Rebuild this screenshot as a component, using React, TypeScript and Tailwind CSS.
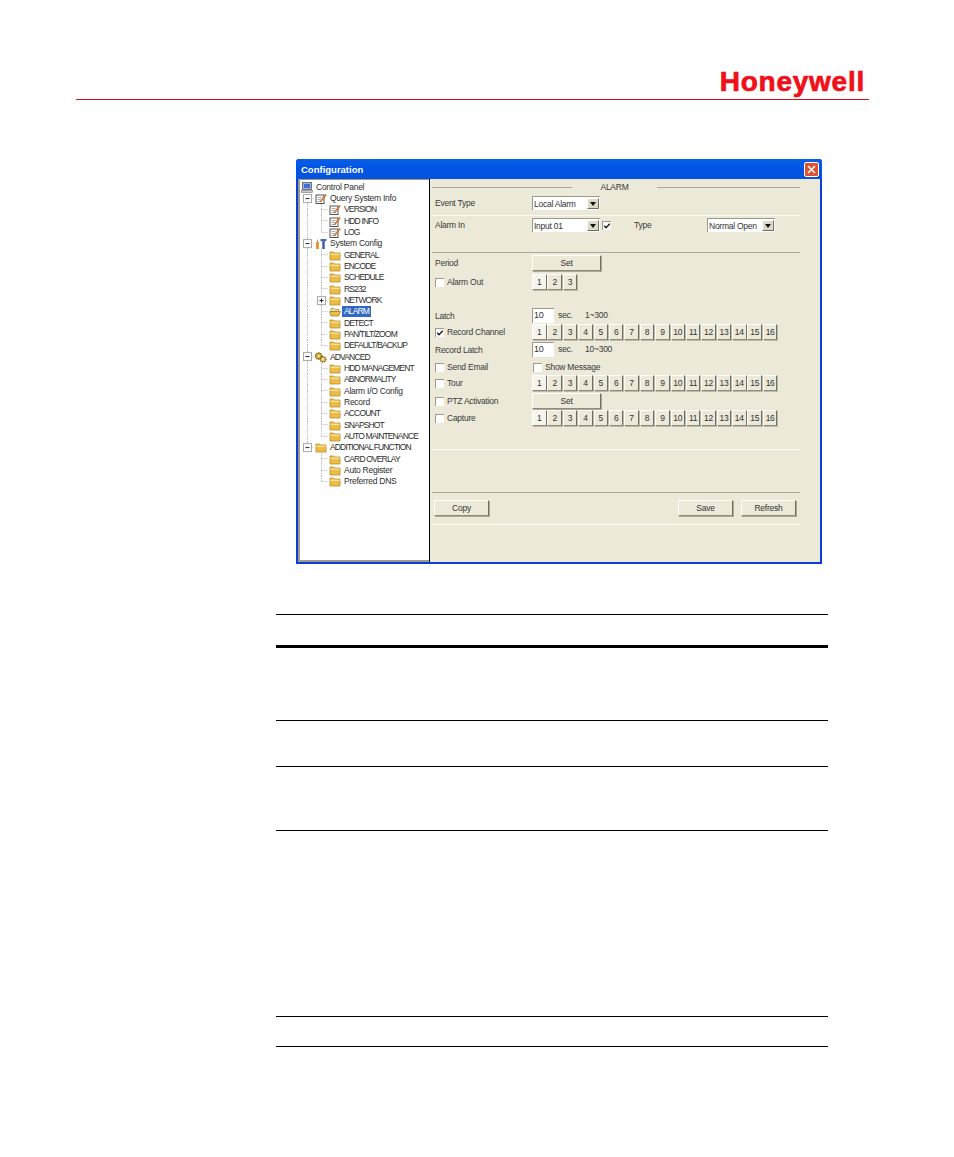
const font = { fontFamily: '"Liberation Sans", Arial, sans-serif' };

type Kind = "monitor" | "note" | "tools" | "gears" | "folder" | "open";
type Item = { label: string; level: 0 | 1; icon: Kind; exp?: "minus" | "plus"; rail?: boolean; v?: "full" | "top" | "bottom" | "none"; sel?: boolean };

const items: Item[] = [
  { label: "Control Panel", level: 0, icon: "monitor", v: "none" },
  { label: "Query System Info", level: 0, icon: "note", exp: "minus", v: "bottom" },
  { label: "VERSION", level: 1, icon: "note", rail: true },
  { label: "HDD INFO", level: 1, icon: "note", rail: true },
  { label: "LOG", level: 1, icon: "note", rail: true },
  { label: "System Config", level: 0, icon: "tools", exp: "minus", v: "full" },
  { label: "GENERAL", level: 1, icon: "folder", rail: true },
  { label: "ENCODE", level: 1, icon: "folder", rail: true },
  { label: "SCHEDULE", level: 1, icon: "folder", rail: true },
  { label: "RS232", level: 1, icon: "folder", rail: true },
  { label: "NETWORK", level: 1, icon: "folder", rail: true, exp: "plus" },
  { label: "ALARM", level: 1, icon: "open", rail: true, sel: true },
  { label: "DETECT", level: 1, icon: "folder", rail: true },
  { label: "PAN/TILT/ZOOM", level: 1, icon: "folder", rail: true },
  { label: "DEFAULT/BACKUP", level: 1, icon: "folder", rail: true },
  { label: "ADVANCED", level: 0, icon: "gears", exp: "minus", v: "full" },
  { label: "HDD MANAGEMENT", level: 1, icon: "folder", rail: true },
  { label: "ABNORMALITY", level: 1, icon: "folder", rail: true },
  { label: "Alarm I/O Config", level: 1, icon: "folder", rail: true },
  { label: "Record", level: 1, icon: "folder", rail: true },
  { label: "ACCOUNT", level: 1, icon: "folder", rail: true },
  { label: "SNAPSHOT", level: 1, icon: "folder", rail: true },
  { label: "AUTO MAINTENANCE", level: 1, icon: "folder", rail: true },
  { label: "ADDITIONAL FUNCTION", level: 0, icon: "folder", exp: "minus", v: "top" },
  { label: "CARD OVERLAY", level: 1, icon: "folder" },
  { label: "Auto Register", level: 1, icon: "folder" },
  { label: "Preferred DNS", level: 1, icon: "folder" },
];

function Icon({ kind }: { kind: Kind }) {
  if (kind === "folder")
    return (
      <svg viewBox="0 0 12 11" className="w-[12px] h-[11px] shrink-0">
        <path d="M1 2h3.5l1 1H11v7H1z" fill="#eebb44" stroke="#b58f2c" strokeWidth="0.8" />
        <path d="M1.5 4.3h9" stroke="#fbe7a6" strokeWidth="1.2" />
      </svg>
    );
  if (kind === "open")
    return (
      <svg viewBox="0 0 12 11" className="w-[12px] h-[11px] shrink-0">
        <path d="M2 2.5h3l1 1h4v2H2z" fill="#f7e3a0" stroke="#8f7a30" strokeWidth="0.7" />
        <path d="M0.5 5.5h11l-2 4.5H2z" fill="#eebb44" stroke="#8f7a30" strokeWidth="0.7" />
      </svg>
    );
  if (kind === "note")
    return (
      <svg viewBox="0 0 12 11" className="w-[12px] h-[11px] shrink-0">
        <rect x="1" y="2" width="8" height="8.5" fill="#fff" stroke="#555" strokeWidth="1" />
        <path d="M2.5 4.5h4M2.5 6.5h3M2.5 8.5h4" stroke="#888" strokeWidth="0.7" />
        <path d="M5.5 7.5 10.5 1.2l1 .8-5 6.3-1.5.7z" fill="#e8862a" stroke="#a04a10" strokeWidth="0.4" />
      </svg>
    );
  if (kind === "monitor")
    return (
      <svg viewBox="0 0 12 11" className="w-[12px] h-[11px] shrink-0">
        <rect x="1.5" y="0.5" width="9" height="7" fill="#9db4dd" stroke="#666" strokeWidth="0.9" />
        <rect x="3" y="2" width="6" height="4" fill="#3f6fd0" />
        <rect x="0.5" y="8.5" width="11" height="2" fill="#c9c9c9" stroke="#777" strokeWidth="0.6" />
      </svg>
    );
  if (kind === "tools")
    return (
      <svg viewBox="0 0 12 11" className="w-[12px] h-[11px] shrink-0">
        <rect x="1" y="4" width="3" height="7" fill="#e69a2e" />
        <rect x="2" y="1.5" width="1" height="2.5" fill="#999" />
        <rect x="5.5" y="1" width="6" height="2.2" fill="#4a6fb0" />
        <rect x="7.3" y="3" width="2.4" height="8" fill="#3b5c98" />
      </svg>
    );
  return (
    <svg viewBox="0 0 14 12" className="w-[13px] h-[11px] shrink-0 -ml-[1px]">
      <circle cx="5" cy="4.4" r="3.4" fill="#e0b02c" stroke="#6b5a20" strokeWidth="1.6" strokeDasharray="1.3 0.9" />
      <circle cx="5" cy="4.4" r="1" fill="#fff" />
      <circle cx="9.8" cy="8" r="3" fill="#e8c04a" stroke="#6b5a20" strokeWidth="1.5" strokeDasharray="1.3 0.9" />
      <circle cx="9.8" cy="8" r="0.9" fill="#fff" />
    </svg>
  );
}

function Gutter({ v, horiz, exp }: { v: "full" | "top" | "bottom" | "none"; horiz?: boolean; exp?: "minus" | "plus" }) {
  const c = "#b4b4b4";
  const y1 = v === "bottom" ? 5.6 : 0;
  const y2 = v === "top" ? 5.6 : 11.33;
  return (
    <svg viewBox="0 0 14 11.33" className="w-[14px] h-[11.33px] shrink-0 overflow-visible">
      {v !== "none" && <line x1="7.5" x2="7.5" y1={y1} y2={y2} stroke={c} strokeDasharray="1 1" />}
      {horiz && <line x1="7.5" x2="14" y1="5.6" y2="5.6" stroke={c} strokeDasharray="1 1" />}
      {exp && (
        <g>
          <rect x="3.5" y="1.6" width="8" height="8" fill="#fff" stroke="#a8a8a8" />
          <line x1="5.5" x2="9.5" y1="5.6" y2="5.6" stroke="#222" />
          {exp === "plus" && <line x1="7.5" x2="7.5" y1="3.6" y2="7.6" stroke="#222" />}
        </g>
      )}
    </svg>
  );
}

function TreeRow({ item, last }: { item: Item; last: boolean }) {
  const upper = item.label === item.label.toUpperCase();
  const textCls = `${upper ? "tracking-[-0.85px]" : "tracking-[-0.25px]"} ${
    item.sel ? "px-[2px] -ml-[2px] bg-[#316ac5] text-white leading-[11px]" : "leading-[11px] text-[#2e2e2e]"
  }`;
  if (item.level === 0) {
    return (
      <div className="flex items-center h-[11.33px] whitespace-nowrap">
        {item.v === "none" ? (
          <div className="ml-px mr-[3px]">
            <Icon kind={item.icon} />
          </div>
        ) : (
          <>
            <Gutter v={item.v!} exp={item.exp} horiz />
            <div className="ml-px mr-[3px]">
              <Icon kind={item.icon} />
            </div>
          </>
        )}
        <span className={textCls}>{item.label}</span>
      </div>
    );
  }
  return (
    <div className="flex items-center h-[11.33px] whitespace-nowrap">
      <Gutter v={item.rail ? "full" : "none"} />
      <Gutter v={last ? "top" : "full"} horiz exp={item.exp} />
      <div className="ml-px mr-[3px]">
        <Icon kind={item.icon} />
      </div>
      <span className={textCls}>{item.label}</span>
    </div>
  );
}

function Tree() {
  return (
    <div className="w-[131px] bg-white border-l-2 border-t border-b-2 border-[#9d9a8c] border-r-0 shrink-0 overflow-hidden pt-[1.5px] text-[8.5px]">
      {items.map((it, i) => (
        <TreeRow key={it.label} item={it} last={i + 1 === items.length || items[i + 1].level === 0} />
      ))}
    </div>
  );
}

const raised = "border border-t-white border-l-white border-r-[#716f64] border-b-[#8f8c7e] shadow-[1px_1px_0_#aca899] bg-[#ece9d8]";

function Btn({ w, children }: { w: string; children: React.ReactNode }) {
  return (
    <div className={`${w} h-[16px] flex items-center justify-center text-[8.5px] pt-px text-[#333] ${raised}`}>
      {children}
    </div>
  );
}

function NumBtns({ n }: { n: number }) {
  return (
    <div className="flex gap-[0.9px]">
      {Array.from({ length: n }, (_, i) => (
        <div
          key={i}
          className={`w-[14.5px] h-[16px] flex items-center justify-center text-[8.5px] pt-px text-[#333] border border-t-white border-l-white border-r-[#716f64] border-b-[#8f8c7e] shadow-[1px_1px_0_#bcb9a9] ${
            i === 0 ? "bg-[#f6f4ec]" : "bg-[#ece9d8]"
          }`}
        >
          {i + 1}
        </div>
      ))}
    </div>
  );
}

function Check({ on }: { on?: boolean }) {
  return (
    <div className="w-[9px] h-[9px] bg-white border-t border-l border-[#9d9a8c] shrink-0 flex items-center justify-center">
      {on && (
        <svg viewBox="0 0 8 8" className="w-[8px] h-[8px]">
          <path d="M1.2 3.8 3 5.8 6.8 1.8" fill="none" stroke="#111" strokeWidth="1.3" />
        </svg>
      )}
    </div>
  );
}

function Select({ w, children }: { w: string; children: React.ReactNode }) {
  return (
    <div className={`${w} h-[14px] bg-white border-t border-l border-[#9d9a8c] flex items-center justify-between text-[8.5px] text-[#333] pl-[1px]`}>
      <span className="whitespace-nowrap pt-px">{children}</span>
      <div className="w-[12px] h-[11px] mr-[1px] bg-[#dcd9c8] border border-t-white border-l-white border-r-[#716f64] border-b-[#716f64] flex items-center justify-center">
        <svg viewBox="0 0 6 4" className="w-[6px] h-[4px]">
          <path d="M0 0h6L3 4z" fill="#111" />
        </svg>
      </div>
    </div>
  );
}

function Input({ v }: { v: string }) {
  return (
    <div className="w-[22px] h-[15px] bg-white border-t border-l border-[#9d9a8c] flex items-center text-[9px] text-[#333] pl-[1px]">
      {v}
    </div>
  );
}

function Label({ children }: { children: React.ReactNode }) {
  return <div className="w-[100px] shrink-0 text-[8.5px] pt-px text-[#3a3a3a] pl-[3px] whitespace-nowrap">{children}</div>;
}

function CheckLabel({ children, on }: { children: React.ReactNode; on?: boolean }) {
  return (
    <div className="w-[100px] shrink-0 flex items-center gap-[3px] text-[8.5px] text-[#3a3a3a] pl-[3px] whitespace-nowrap">
      <Check on={on} />
      <span className="pt-px">{children}</span>
    </div>
  );
}

function SepLight() {
  return <div className="w-[368px] h-px bg-[#fbfaf4]" />;
}
function SepDark() {
  return <div className="w-[368px] h-px bg-[#aca899]" />;
}

function Panel() {
  return (
    <div className="flex-1 bg-[#ece9d8] pl-[2px] text-[8.5px] tracking-[-0.25px]">
      <div className="h-[16px] w-[368px] flex items-center">
        <div className="w-[140px] h-px bg-[#aca899]" />
        <div className="flex-1 text-center text-[#3a3a3a]">ALARM</div>
        <div className="w-[143px] h-px bg-[#aca899]" />
      </div>
      <div className="mt-px h-[14px] flex items-center">
        <Label>Event Type</Label>
        <Select w="w-[68px]">Local Alarm</Select>
      </div>
      <div className="mt-[5px]"><SepLight /></div>
      <div className="mt-[2px] h-[14px] flex items-center">
        <Label>Alarm In</Label>
        <Select w="w-[68px]">Input 01</Select>
        <div className="ml-[2px]"><Check on /></div>
        <div className="ml-[23px] w-[73px] pt-px text-[#3a3a3a]">Type</div>
        <Select w="w-[68px]">Normal Open</Select>
      </div>
      <div className="mt-[20px]"><SepDark /></div>
      <div className="mt-[2px] h-[16px] flex items-center">
        <Label>Period</Label>
        <Btn w="w-[69px]">Set</Btn>
      </div>
      <div className="mt-[3px] h-[16px] flex items-center">
        <CheckLabel>Alarm Out</CheckLabel>
        <NumBtns n={3} />
      </div>
      <div className="mt-[18px] h-[15px] flex items-center">
        <Label>Latch</Label>
        <Input v="10" />
        <span className="ml-[4px] w-[27px] text-[#3a3a3a]">sec.</span>
        <span className="text-[#3a3a3a]">1~300</span>
      </div>
      <div className="mt-px h-[16px] flex items-center">
        <CheckLabel on>Record Channel</CheckLabel>
        <NumBtns n={16} />
      </div>
      <div className="mt-[2px] h-[15px] flex items-center">
        <Label>Record Latch</Label>
        <Input v="10" />
        <span className="ml-[4px] w-[27px] text-[#3a3a3a]">sec.</span>
        <span className="text-[#3a3a3a]">10~300</span>
      </div>
      <div className="mt-[3px] h-[14px] flex items-center">
        <CheckLabel>Send Email</CheckLabel>
        <div className="flex items-center gap-[3px] pl-px text-[#3a3a3a]">
          <Check />
          <span className="pt-px">Show Message</span>
        </div>
      </div>
      <div className="mt-px h-[16px] flex items-center">
        <CheckLabel>Tour</CheckLabel>
        <NumBtns n={16} />
      </div>
      <div className="mt-[2px] h-[16px] flex items-center">
        <CheckLabel>PTZ Activation</CheckLabel>
        <Btn w="w-[69px]">Set</Btn>
      </div>
      <div className="mt-px h-[16px] flex items-center">
        <CheckLabel>Capture</CheckLabel>
        <NumBtns n={16} />
      </div>
      <div className="mt-[23px]"><SepLight /></div>
      <div className="mt-[42px]"><SepDark /></div>
      <div className="mt-[7px] h-[16px] w-[364px] pl-[2px] flex items-center justify-between">
        <Btn w="w-[55px]">Copy</Btn>
        <div className="flex gap-[8px]">
          <Btn w="w-[55px]">Save</Btn>
          <Btn w="w-[55px]">Refresh</Btn>
        </div>
      </div>
      <div className="mt-[8px]"><SepLight /></div>
    </div>
  );
}

function Dialog() {
  return (
    <div className="ml-[296px] mt-[59px] w-[526px] h-[405px] bg-[#0a3ed6] rounded-t-[3px] flex flex-col px-[2px] pb-[2px]">
      <div className="h-[20px] flex items-center justify-between bg-[linear-gradient(#0a5fe8,#0055e5_40%,#0352df)] -mx-[2px] px-[5px] rounded-t-[3px]">
        <span className="text-white text-[9.5px] font-bold pt-[2px]">Configuration</span>
        <div className="w-[15px] h-[15px] rounded-[2px] border border-white bg-[#dc5230] flex items-center justify-center mr-[-2px]">
          <svg viewBox="0 0 9 9" className="w-[9px] h-[9px]">
            <path d="M1 1l7 7M8 1 1 8" stroke="#fff" strokeWidth="1.6" />
          </svg>
        </div>
      </div>
      <div className="flex flex-1 min-h-0">
        <Tree />
        <div className="w-px bg-black shrink-0" />
        <Panel />
      </div>
    </div>
  );
}

function Rule({ thick }: { thick?: boolean }) {
  return <div className={thick ? "h-[3px] bg-black" : "h-px bg-black"} />;
}

export default function App() {
  return (
    <div className="w-[954px] h-[1157px] bg-white overflow-hidden" style={font}>
      <div className="ml-[76px] w-[793px] h-[100px] flex flex-col justify-end">
        <div className="flex justify-end pr-[4px]">
          <span className="text-[#f0101a] font-bold text-[28px] leading-[28px] tracking-[0.75px] mb-[3px] [-webkit-text-stroke:0.7px_#f0101a]">Honeywell</span>
        </div>
        <div className="h-px bg-[#c8141a]" />
      </div>
      <Dialog />
      <div className="ml-[276px] w-[552px]">
        <div className="mt-[50px]"><Rule /></div>
        <div className="mt-[30px]"><Rule thick /></div>
        <div className="mt-[72px]"><Rule /></div>
        <div className="mt-[45px]"><Rule /></div>
        <div className="mt-[63px]"><Rule /></div>
        <div className="mt-[185px]"><Rule /></div>
        <div className="mt-[29px]"><Rule /></div>
      </div>
    </div>
  );
}
